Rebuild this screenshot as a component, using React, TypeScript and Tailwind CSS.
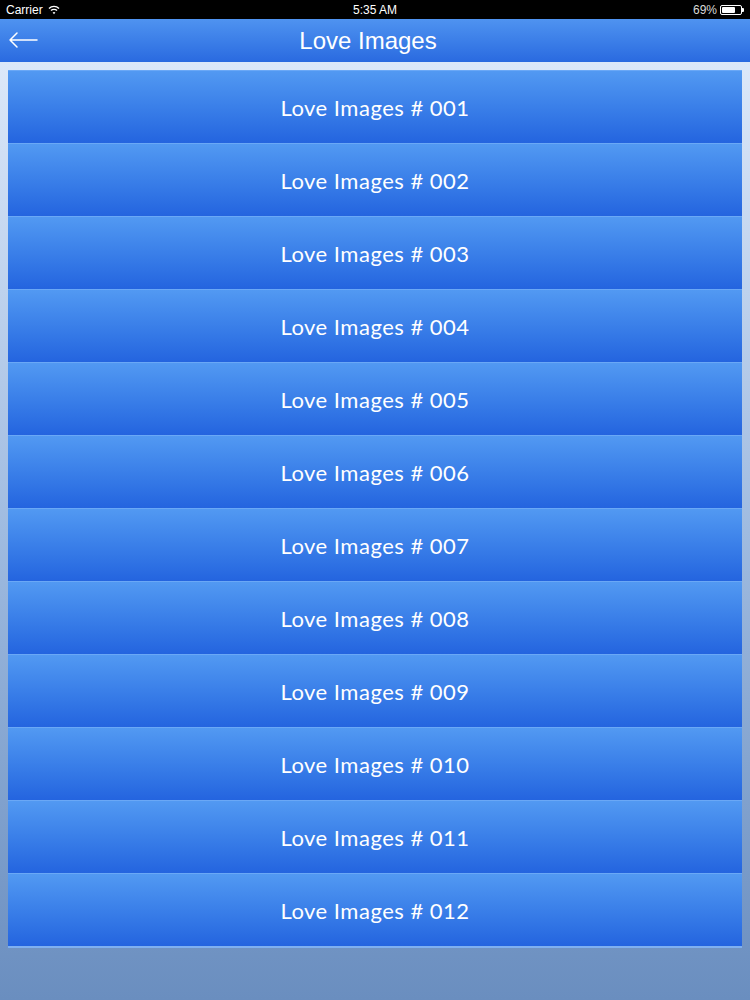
import React from 'react';

const items = Array.from({ length: 12 }, (_, i) => `Love Images # ${String(i + 1).padStart(3, '0')}`);

export default function App() {
  return (
    <div className="w-[750px] h-[1000px] flex flex-col overflow-hidden" style={{ fontFamily: 'Lato, "Noto Sans", sans-serif' }}>
      {/* status bar */}
      <div className="h-[19px] bg-black text-white flex items-center justify-between px-[6px] text-[12px]" style={{ fontFamily: '"Liberation Sans", Arial, sans-serif' }}>
        <div className="flex items-center gap-[5px] w-[120px]">
          <span>Carrier</span>
          <svg width="12" height="10" viewBox="0 0 12 10">
            <path d="M1 3.5 A7 7 0 0 1 11 3.5" stroke="white" strokeWidth="1.4" fill="none" />
            <path d="M3 5.6 A4.2 4.2 0 0 1 9 5.6" stroke="white" strokeWidth="1.4" fill="none" />
            <path d="M4.6 7.6 L6 9.2 L7.4 7.6 A2 2 0 0 0 4.6 7.6 Z" fill="white" />
          </svg>
        </div>
        <span>5:35 AM</span>
        <div className="flex items-center justify-end gap-[3px] w-[120px] text-[#d8d8d8]">
          <span>69%</span>
          <div className="flex items-center">
            <div className="w-[22px] h-[10px] border border-white rounded-[2px] p-[1px]">
              <div className="w-[13px] h-full bg-white rounded-[1px]" />
            </div>
            <div className="w-[2px] h-[4px] bg-white rounded-r-[1px]" />
          </div>
        </div>
      </div>

      {/* nav bar */}
      <div className="h-[43px] bg-gradient-to-b from-[#4f93f0] to-[#2a6ae0] relative flex items-center justify-center pr-[14px] text-white">
        <svg className="absolute left-[8px] top-[12px]" width="30" height="18" viewBox="0 0 30 18">
          <path d="M29 9 H2 M9 2 L2 9 L9 16" stroke="white" strokeWidth="1.5" fill="none" strokeLinecap="round" strokeLinejoin="round" />
        </svg>
        <span className="text-[24px] leading-none font-light" style={{ fontFamily: '"Liberation Sans", Arial, sans-serif' }}>Love Images</span>
      </div>

      {/* content */}
      <div className="flex-1 bg-gradient-to-b from-[#dce8f9] via-[#9fbbe0] to-[#6a8ebf] px-[8px] pt-[8px]">
        <div className="flex flex-col">
          {items.map((t) => (
            <div
              key={t}
              className="h-[73px] flex items-center justify-center text-white text-[22px] tracking-[0.5px] bg-gradient-to-b from-[#5299f2] to-[#2464df] border-t border-[#6aa8f6]"
            >
              {t}
            </div>
          ))}
          <div className="h-[2px] bg-[#7fb0f0]" />
        </div>
      </div>
    </div>
  );
}
